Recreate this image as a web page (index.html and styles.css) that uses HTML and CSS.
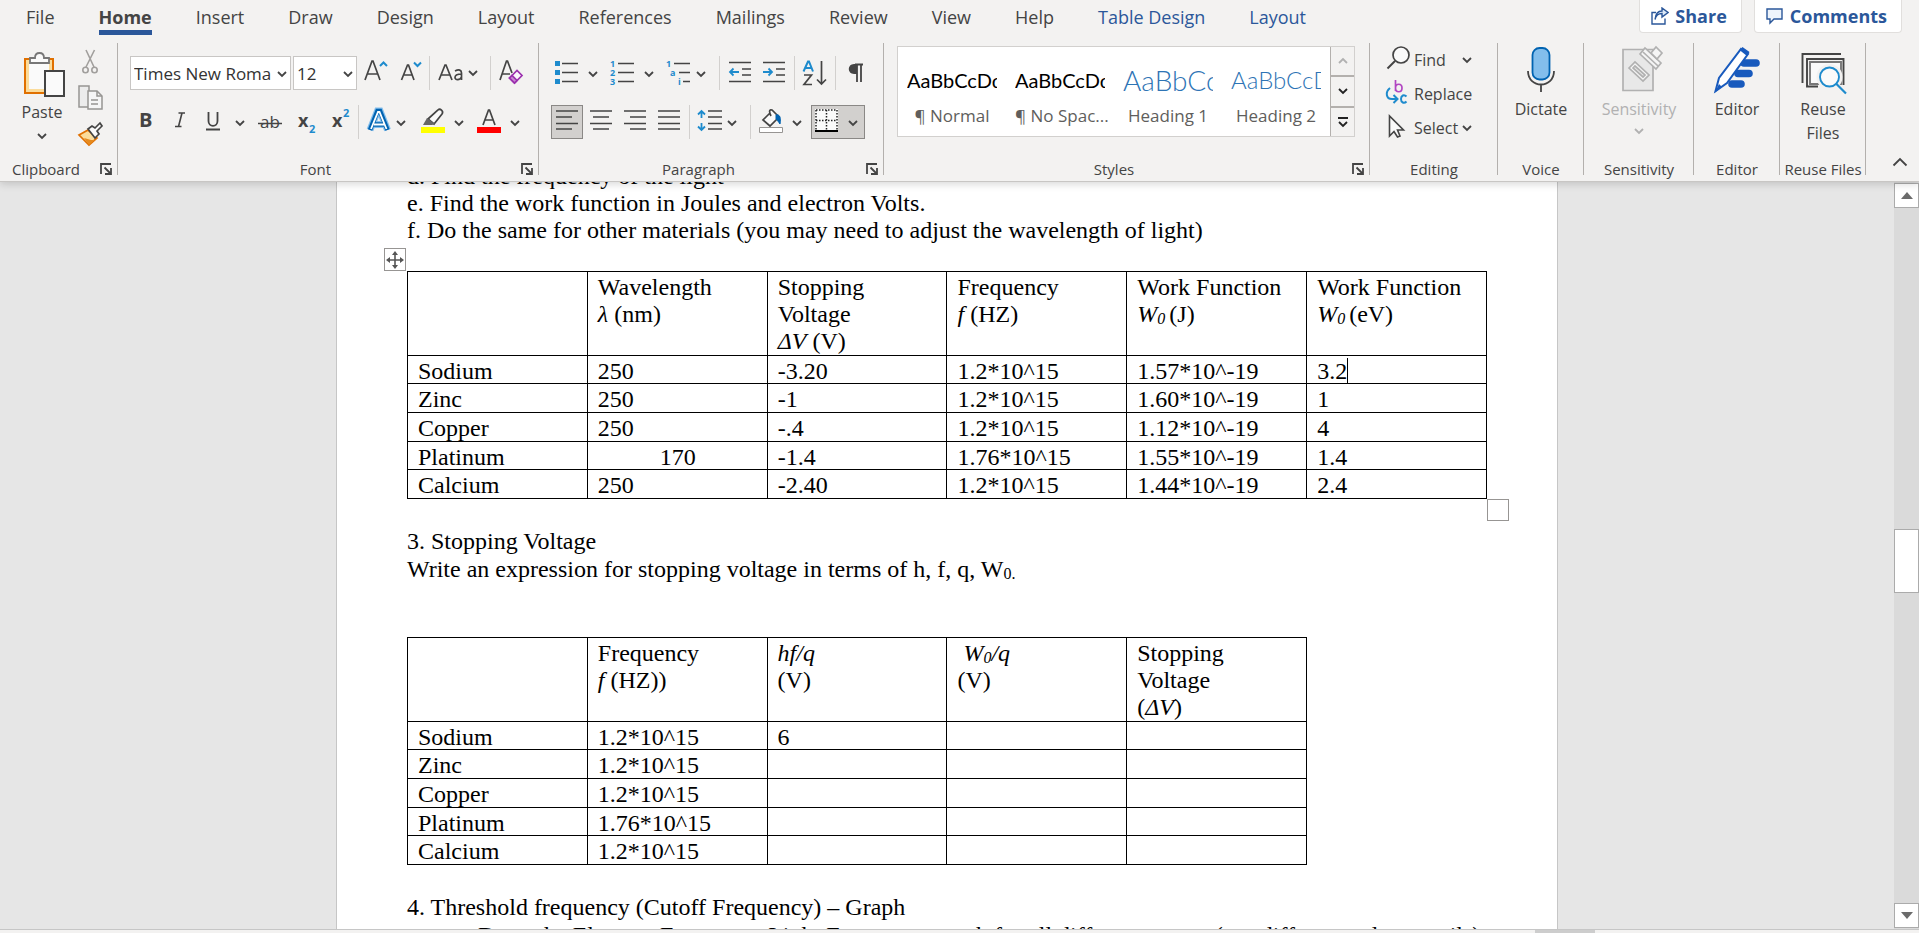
FILE: index.html
```html
<!DOCTYPE html>
<html lang="en">
<head>
<meta charset="utf-8">
<title>Document editor</title>
<link rel="stylesheet" href="styles.css">
</head>
<body>
<svg class="defs" width="0" height="0" aria-hidden="true">
  <defs>
    <path id="chev" d="M-4 -2L0 2L4 -2" fill="none" stroke="currentColor" stroke-width="1.8"/>
    <path id="launch" d="M1 11V1H11M4.500 4.500L10 10M11 5V11H5" fill="none" stroke="#444" stroke-width="1.800"/>
  </defs>
</svg>
<header class="ribbon">
  <nav class="tabs" aria-label="Ribbon tabs">
    <button class="tab">File</button>
    <button class="tab active">Home</button>
    <button class="tab">Insert</button>
    <button class="tab">Draw</button>
    <button class="tab">Design</button>
    <button class="tab">Layout</button>
    <button class="tab">References</button>
    <button class="tab">Mailings</button>
    <button class="tab">Review</button>
    <button class="tab">View</button>
    <button class="tab">Help</button>
    <button class="tab context">Table Design</button>
    <button class="tab context">Layout</button>
    <div class="actions">
      <button class="action"><svg width="18" height="18" viewBox="0 0 18 18" fill="none" stroke="#2b579a" stroke-width="1.400"><path d="M5 5.500H1V17H14V11.500"/><path fill="#dce9f7" d="M4 12.500C5 8 7.500 6.500 11 6.500V10L17 5.500L11 1V4C7 4 4.500 7 4 12.500Z"/></svg>Share</button>
      <button class="action"><svg width="18" height="18" viewBox="0 0 18 18" fill="#eef4fb" stroke="#2b579a" stroke-width="1.400"><path d="M1 2H16V12H8L4 16V12H1Z"/></svg>Comments</button>
    </div>
  </nav>

  <div class="groups">
    <section class="group clipboard" aria-label="Clipboard">
      <div class="group-body">
        <button class="big paste"><svg width="48" height="54" viewBox="20 43 48 54"><path d="M27 56H55V90H27Z" fill="#fbdc9b" stroke="#e07000" stroke-width="2"/><path d="M31 60H51V86H31Z" fill="#fafafa"/><path d="M32 60V55H37C37 51 39 50 41.500 50S46 51 46 55H51V60Z" fill="#fafafa" stroke="#777" stroke-width="1.800"/><path d="M47 68H66V93H47Z" fill="#fafafa" stroke="#444" stroke-width="2"/></svg><span>Paste</span><svg width="12" height="24" viewBox="-6 -12 12 24"><use href="#chev"/></svg></button>
        <div class="stack">
          <button aria-label="Cut"><svg width="28" height="34" viewBox="76 43 28 34" fill="none" stroke="#a19f9d" stroke-width="1.600"><path d="M86 50L94 67M94.500 50L86 67"/><circle cx="85.500" cy="70" r="2.700"/><circle cx="94.500" cy="70" r="2.700"/></svg></button>
          <button aria-label="Copy"><svg width="28" height="34" viewBox="76 80 28 34" fill="#ececec" stroke="#979593" stroke-width="1.500"><path d="M79 86H89V107H79Z"/><path fill="#f6f6f6" d="M88 91H97L102 96V109H88Z"/><path d="M97 91V96H102M91 100H98M91 104H98" fill="none"/></svg></button>
          <button aria-label="Format Painter"><svg width="28" height="34" viewBox="76 116 28 34" stroke-width="1.700"><path d="M88 129L79 134L89 144L97 137Z" fill="#fbdc9b" stroke="#e07000"/><path d="M84 137L91 139L95 139L89 144Z" fill="#e58a1f"/><path d="M88 128L92 125L95 127L100 122L102 125L97 130L99 133L95 137Z" fill="#fafafa" stroke="#444"/></svg></button>
        </div>
      </div>
      <footer class="group-label"><span>Clipboard</span><button aria-label="Clipboard settings"><svg width="12" height="12"><use href="#launch"/></svg></button></footer>
    </section>

    <section class="group font" aria-label="Font">
      <div class="rows">
        <div class="row">
          <label class="combo face"><select aria-label="Font name"><option>Times New Roma</option></select><svg width="12" height="12" viewBox="-6 -6 12 12"><use href="#chev"/></svg></label>
          <label class="combo size"><select aria-label="Font size"><option>12</option></select><svg width="12" height="12" viewBox="-6 -6 12 12"><use href="#chev"/></svg></label>
          <button aria-label="Grow font"><svg width="38" height="34" viewBox="357 56 38 34" fill="none" stroke="#444" stroke-width="1.700"><path d="M365 80L372 61H373L380 80M367.500 74H377.500"/><path d="M380 66L383.500 62.500L387 66" stroke="#1e8bcd" stroke-width="2"/></svg></button>
          <button aria-label="Shrink font"><svg width="34" height="34" viewBox="395 56 34 34" fill="none" stroke="#444" stroke-width="1.700"><path d="M401.500 80L407.500 65H408.500L414 80M404 75H412"/><path d="M414 62.500L417.500 66L421 62.500" stroke="#1e8bcd" stroke-width="2"/></svg></button>
          <i class="sep"></i>
          <button aria-label="Change case"><svg width="60" height="34" viewBox="430 56 60 34"><g fill="none" stroke="#444" stroke-width="1.700"><path d="M439 80L445 65H446L452 80M441.500 75H449.500"/><path d="M455 71C459 69 461.500 70 461.500 73V80M461.500 74C457 74 455 75 455 77.500C455 80.500 460 80.500 461.500 77"/></g><use href="#chev" x="473" y="73"/></svg></button>
          <i class="sep"></i>
          <button aria-label="Clear formatting"><svg width="40" height="34" viewBox="491 56 40 34" fill="none" stroke="#444" stroke-width="1.700"><path d="M500 80L506.500 61H507.500L512 73M502.500 74H510"/><path d="M509.500 78L517 70.500L522 75.500L514.500 83Z" fill="#faf4fb" stroke="#9b2fae"/><path d="M509.500 78L512 75.500L517 80.500L514.500 83Z" fill="#c889d3" stroke="#9b2fae"/></svg></button>
        </div>
        <div class="row">
          <button aria-label="Bold"><svg width="32" height="34" viewBox="130 105 32 34"><text x="139" y="127" font-size="20" font-weight="700">B</text></svg></button>
          <button aria-label="Italic"><svg width="35" height="34" viewBox="162 105 35 34" fill="none" stroke="#444" stroke-width="1.600"><path d="M178.500 113H185M175 126.500H181.500M182 113L178.500 126.500"/></svg></button>
          <button aria-label="Underline"><svg width="55" height="34" viewBox="197 105 55 34"><path d="M208.500 112V121C208.500 127.500 217.500 127.500 217.500 121V112M206 129.500H220" fill="none" stroke="#444" stroke-width="1.800"/><use href="#chev" x="240" y="123"/></svg></button>
          <button aria-label="Strikethrough"><svg width="36" height="34" viewBox="252 105 36 34"><text x="260" y="128" font-size="17">ab</text><path d="M258 123.500H282" stroke="#444" stroke-width="1.500"/></svg></button>
          <button aria-label="Subscript"><svg width="36" height="34" viewBox="288 105 36 34"><text x="298" y="127" font-size="18" font-weight="700">x</text><text x="309" y="133" font-size="11" font-weight="700" class="blue">2</text></svg></button>
          <button aria-label="Superscript"><svg width="34" height="34" viewBox="324 105 34 34"><text x="332" y="127" font-size="18" font-weight="700">x</text><text x="343" y="117" font-size="11" font-weight="700" class="blue">2</text></svg></button>
          <i class="sep"></i>
          <button aria-label="Text effects"><svg width="54" height="34" viewBox="359 105 54 34"><path d="M370 130L377.500 111H380L387.500 130M373 124.500H385" fill="none" stroke="#83beec" stroke-width="7"/><path d="M370 130L377.500 111H380L387.500 130M373 124.500H385" fill="none" stroke="#0063b1" stroke-width="4.600"/><path d="M371 129L378 112H379.500L386.500 129M374 124.500H384" fill="none" stroke="#fff" stroke-width="1.800"/><use href="#chev" x="401" y="123"/></svg></button>
          <button aria-label="Text highlight color"><svg width="56" height="34" viewBox="413 105 56 34"><path d="M421 127H445V133H421Z" fill="#ff0"/><path d="M428 119L438 110C440 108 444 111 442 114L434 124Z" fill="#fafafa" stroke="#444" stroke-width="1.700"/><path d="M427 118L435 124L432 125H423Z" fill="#666"/><use href="#chev" x="459" y="123"/></svg></button>
          <button aria-label="Font color"><svg width="60" height="34" viewBox="469 105 60 34"><path d="M477 127H501V133H477Z" fill="red"/><path d="M483 125L488.500 110H489.500L495 125M485 120H493" fill="none" stroke="#444" stroke-width="1.700"/><use href="#chev" x="515" y="123"/></svg></button>
        </div>
      </div>
      <footer class="group-label"><span>Font</span><button aria-label="Font settings"><svg width="12" height="12"><use href="#launch"/></svg></button></footer>
    </section>

    <section class="group paragraph" aria-label="Paragraph">
      <div class="rows">
        <div class="row">
          <button aria-label="Bullets"><svg width="52" height="34" viewBox="551 56 52 34"><path d="M555 61H560V66H555ZM555 70H560V75H555ZM555 79H560V84H555Z" fill="#1e8bcd"/><path d="M562 63.500H578M562 72.500H578M562 81.500H578" stroke="#444" stroke-width="1.500"/><use href="#chev" x="593" y="74"/></svg></button>
          <button aria-label="Numbering"><svg width="56" height="34" viewBox="603 56 56 34"><g class="blue" font-size="9" font-weight="700"><text x="610" y="67">1</text><text x="610" y="76">2</text><text x="610" y="85">3</text></g><path d="M618 63.500H634M618 72.500H634M618 81.500H634" stroke="#444" stroke-width="1.500"/><use href="#chev" x="649" y="74"/></svg></button>
          <button aria-label="Multilevel list"><svg width="60" height="34" viewBox="659 56 60 34"><g class="blue" font-size="9" font-weight="700"><text x="666" y="67">1</text><text x="670" y="76">a</text><text x="678" y="85">i</text></g><path d="M674 63.500H690M679 72.500H690M683 81.500H690" stroke="#444" stroke-width="1.500"/><use href="#chev" x="701" y="74"/></svg></button>
          <i class="sep"></i>
          <button aria-label="Decrease indent"><svg width="37" height="34" viewBox="720 56 37 34" fill="none" stroke="#444" stroke-width="1.500"><path d="M729 62.500H751M742 69H751M742 75H751M729 81.500H751"/><path d="M739 72H730M733.500 68.500L730 72L733.500 75.500" stroke="#1e8bcd" stroke-width="1.800"/></svg></button>
          <button aria-label="Increase indent"><svg width="37" height="34" viewBox="757 56 37 34" fill="none" stroke="#444" stroke-width="1.500"><path d="M763 62.500H785M776 69H785M776 75H785M763 81.500H785"/><path d="M763 72H772M768.500 68.500L772 72L768.500 75.500" stroke="#1e8bcd" stroke-width="1.800"/></svg></button>
          <i class="sep"></i>
          <button aria-label="Sort"><svg width="40" height="34" viewBox="795 56 40 34" fill="none" stroke="#444" stroke-width="1.700"><path d="M803.500 71.500L808 61.500H809L813 71.500M805 68H811.500" stroke="#1e8bcd" stroke-width="2"/><path d="M804 75H811.500L804 84.500H812M821.500 61V84M817 79.500L821.500 84L826 79.500"/></svg></button>
          <i class="sep"></i>
          <button aria-label="Show formatting marks"><svg width="38" height="34" viewBox="836 56 38 34"><path d="M855 64.500H863M857 64V82M861 64V82" stroke="#444" stroke-width="1.800"/><path d="M857 64H854C847 64 847 74 854 74H857Z" fill="#444"/></svg></button>
        </div>
        <div class="row">
          <button class="pressed" aria-label="Align left"><svg width="32" height="34" viewBox="551 105 32 34"><path d="M556 111H578M556 117H572M556 123.500H578M556 129H572" stroke="#444" stroke-width="1.600"/></svg></button>
          <button aria-label="Center"><svg width="35" height="34" viewBox="583 105 35 34"><path d="M590 111H612M593 117H609M590 123.500H612M593 129H609" stroke="#444" stroke-width="1.600"/></svg></button>
          <button aria-label="Align right"><svg width="34" height="34" viewBox="618 105 34 34"><path d="M624 111H646M630 117H646M624 123.500H646M630 129H646" stroke="#444" stroke-width="1.600"/></svg></button>
          <button aria-label="Justify"><svg width="37" height="34" viewBox="652 105 37 34"><path d="M658 111H680M658 117H680M658 123.500H680M658 129H680" stroke="#444" stroke-width="1.600"/></svg></button>
          <i class="sep"></i>
          <button aria-label="Line spacing"><svg width="60" height="34" viewBox="690 105 60 34"><path d="M701.500 111V118M698 114.500L701.500 111L705 114.500M701.500 130V123M698 126.500L701.500 130L705 126.500" fill="none" stroke="#1e8bcd" stroke-width="1.800"/><path d="M708 111H722M708 117H722M708 123.500H722M708 129H722" stroke="#444" stroke-width="1.600"/><use href="#chev" x="732" y="123"/></svg></button>
          <i class="sep"></i>
          <button aria-label="Shading"><svg width="60" height="34" viewBox="751 105 60 34"><path d="M759.500 127.500H782.500V132.500H759.500Z" fill="#fff" stroke="#979593"/><path d="M770 113L763 120L770 126L779 117L772 110C769 109 769 112 771 116" fill="#fafafa" stroke="#444" stroke-width="1.700"/><path d="M776 115C780 114 781 118 780 124C778 121 777 120 776 119Z" fill="#0063b1" stroke="#0063b1"/><use href="#chev" x="797" y="123"/></svg></button>
          <button class="pressed" aria-label="Borders"><svg width="54" height="34" viewBox="811 105 54 34"><path d="M815 109H838V131H815Z" fill="#fafafa"/><path d="M816 110H837M816 120.500H837M816 110V130M826.500 110V130M837 110V130" fill="none" stroke="#222" stroke-width="1.500" stroke-dasharray="1.500 1.500"/><path d="M815 131H838" stroke="#000" stroke-width="2"/><use href="#chev" x="853" y="123"/></svg></button>
        </div>
      </div>
      <footer class="group-label"><span>Paragraph</span><button aria-label="Paragraph settings"><svg width="12" height="12"><use href="#launch"/></svg></button></footer>
    </section>

    <section class="group styles" aria-label="Styles">
      <div class="gallery">
        <button class="style"><span class="preview">AaBbCcDd</span><span class="name">¶ Normal</span></button>
        <button class="style"><span class="preview">AaBbCcDd</span><span class="name">¶ No Spac...</span></button>
        <button class="style"><span class="preview h1">AaBbCc</span><span class="name">Heading 1</span></button>
        <button class="style"><span class="preview h2">AaBbCcD</span><span class="name">Heading 2</span></button>
        <div class="gallery-nav">
          <button class="off" aria-label="Previous styles"><svg width="12" height="12" viewBox="-6 -6 12 12"><path d="M-4 2L0 -2L4 2" fill="none" stroke="currentColor" stroke-width="1.800"/></svg></button>
          <button aria-label="Next styles"><svg width="12" height="12" viewBox="-6 -6 12 12"><use href="#chev"/></svg></button>
          <button aria-label="More styles"><svg width="12" height="12" viewBox="-6 -6 12 12"><path d="M-5 -4H5" stroke="currentColor" stroke-width="2"/><use href="#chev" y="2"/></svg></button>
        </div>
      </div>
      <footer class="group-label"><span>Styles</span><button aria-label="Styles settings"><svg width="12" height="12"><use href="#launch"/></svg></button></footer>
    </section>

    <section class="group editing" aria-label="Editing">
      <div class="list">
        <button><svg width="30" height="34" viewBox="1384 43 30 34"><circle cx="1401" cy="55" r="8" fill="#fafafa" stroke="#444" stroke-width="1.700"/><path d="M1395 61L1387.500 68.500" stroke="#444" stroke-width="2"/></svg><span class="find">Find</span><svg width="12" height="12" viewBox="-6 -6 12 12"><use href="#chev"/></svg></button>
        <button><svg width="30" height="34" viewBox="1384 77 30 34" fill="none" stroke-width="2"><path d="M1395.500 80V91M1395.500 88C1395.500 83 1402 83 1402 88S1395.500 93 1395.500 88" stroke="#b146c2" stroke-width="1.700"/><path d="M1406.500 96.500C1404 94 1401 95.500 1401 99S1404 104 1406.500 101.500" stroke="#1e8bcd"/><path d="M1390 88C1385 92 1386 99 1392 99H1397M1393.500 95L1397.500 99L1393.500 103" stroke="#1e8bcd"/></svg><span>Replace</span></button>
        <button><svg width="30" height="34" viewBox="1384 111 30 34"><path d="M1389.500 116V136L1394 131.500L1397.500 137L1400 136L1397.500 130H1403.500Z" fill="#fafafa" stroke="#444" stroke-width="1.600"/></svg><span>Select</span><svg width="18" height="12" viewBox="-9 -6 18 12"><use href="#chev"/></svg></button>
      </div>
      <footer class="group-label plain"><span>Editing</span></footer>
    </section>

    <section class="group voice" aria-label="Voice">
      <button class="big"><svg width="54" height="54" viewBox="1514 43 54 54" fill="none" stroke="#444" stroke-width="1.800"><rect x="1532.500" y="48" width="17" height="31.500" rx="7" fill="#83beec" stroke="#0063b1"/><path d="M1528 71C1528 89 1554 89 1554 71M1541 84.500V92"/></svg><span>Dictate</span></button>
      <footer class="group-label plain"><span>Voice</span></footer>
    </section>

    <section class="group sensitivity" aria-label="Sensitivity">
      <button class="big" disabled><svg width="54" height="54" viewBox="1612 43 54 54" fill="#e8e8e8" stroke="#b1b1b1" stroke-width="1.700"><path d="M1623 49.500H1653V90.500H1623Z"/><path d="M1629 68L1635 62L1649 75L1643 81Z" fill="#f5f5f5"/><path d="M1633 68L1635 66L1645 75L1643 77Z"/><path d="M1640 54L1645 48L1661 63L1656 69Z" fill="#f5f5f5"/><path d="M1643 52L1658 66"/><path d="M1651 53L1656 47L1662 53L1657 59Z" fill="#f5f5f5"/></svg><span>Sensitivity</span><svg width="12" height="24" viewBox="-6 -10 12 24"><use href="#chev"/></svg></button>
      <footer class="group-label plain"><span>Sensitivity</span></footer>
    </section>

    <section class="group editor" aria-label="Editor">
      <button class="big"><svg width="54" height="54" viewBox="1710 43 54 54"><path d="M1744 63H1756M1738 73.500H1749M1732 84H1741" stroke="#185abd" stroke-width="7.600" stroke-linecap="round"/><path d="M1741 49L1748 54L1727 83L1715.500 91L1719 78Z" fill="#fff" stroke="#185abd" stroke-width="2"/><path d="M1739.500 50L1742.500 47L1749.500 52L1747 56Z" fill="#185abd"/><path d="M1719 84L1722 87L1714.500 93Z" fill="#185abd"/></svg><span>Editor</span></button>
      <footer class="group-label plain"><span>Editor</span></footer>
    </section>

    <section class="group reuse" aria-label="Reuse Files">
      <button class="big"><svg width="54" height="54" viewBox="1796 43 54 54" fill="none" stroke="#444" stroke-width="1.900"><path d="M1802.500 83V54H1841"/><path d="M1818 86.500H1807V59H1843.500V85"/><path d="M1810 62H1841V84H1810Z" fill="#fafafa" stroke="#777"/><circle cx="1829.500" cy="77" r="13" fill="#f3f2f1" stroke="none"/><circle cx="1829.500" cy="77" r="9.500" fill="#fafafa" stroke="#1e8bcd"/><path d="M1836 83.500L1846 93.500" stroke="#1e8bcd" stroke-width="2.200"/></svg><span>Reuse Files</span></button>
      <footer class="group-label plain"><span>Reuse Files</span></footer>
    </section>

    <button class="collapse" aria-label="Collapse the ribbon"><svg width="16" height="12" viewBox="0 0 16 12"><path d="M1.500 9.500L8 3L14.500 9.500" fill="none" stroke="#444" stroke-width="1.800"/></svg></button>
  </div>
</header>

<main class="workspace">
  <div class="canvas">
    <article class="page">
      <p>d. Find the frequency of the light</p>
      <p>e. Find the work function in Joules and electron Volts.</p>
      <p>f. Do the same for other materials (you may need to adjust the wavelength of light)</p>
      <p><br></p>
      <div class="table-wrap">
        <button class="move" aria-label="Move table"><svg width="18" height="18" viewBox="0 0 18 18"><path d="M9 2V16M2 9H16" stroke="#555" stroke-width="1.600"/><path d="M9 0L12 4H6ZM9 18L12 14H6ZM0 9L4 6V12ZM18 9L14 6V12Z" fill="#555"/></svg></button>
        <table class="six">
          <tr><th></th><th>Wavelength<br><i>λ</i> (nm)</th><th>Stopping Voltage<br><i>ΔV</i> (V)</th><th>Frequency<br><i>f </i>(HZ)</th><th>Work Function<br><i>W<sub>0 </sub></i>(J)</th><th>Work Function<br><i>W<sub>0 </sub></i>(eV)</th></tr>
          <tr><td>Sodium</td><td>250</td><td>-3.20</td><td>1.2*10^15</td><td>1.57*10^-19</td><td><span class="caret">3.2</span></td></tr>
          <tr><td>Zinc</td><td>250</td><td>-1</td><td>1.2*10^15</td><td>1.60*10^-19</td><td>1</td></tr>
          <tr><td>Copper</td><td>250</td><td>-.4</td><td>1.2*10^15</td><td>1.12*10^-19</td><td>4</td></tr>
          <tr><td>Platinum</td><td class="indent">170</td><td>-1.4</td><td>1.76*10^15</td><td>1.55*10^-19</td><td>1.4</td></tr>
          <tr><td>Calcium</td><td>250</td><td>-2.40</td><td>1.2*10^15</td><td>1.44*10^-19</td><td>2.4</td></tr>
        </table>
        <span class="resize"></span>
      </div>
      <p class="loose"><br></p>
      <p class="loose">3. Stopping Voltage</p>
      <p class="loose">Write an expression for stopping voltage in terms of h, f, q, W<sub>0.</sub></p>
      <p><br></p>
      <p><br></p>
      <table class="five">
        <tr><th></th><th>Frequency<br><i>f </i>(HZ))</th><th><i>hf/q</i><br>(V)</th><th>&nbsp;<i>W<sub>0</sub>/q</i><br>(V)</th><th>Stopping Voltage<br>(<i>ΔV</i>)</th></tr>
        <tr><td>Sodium</td><td>1.2*10^15</td><td>6</td><td></td><td></td></tr>
        <tr><td>Zinc</td><td>1.2*10^15</td><td></td><td></td><td></td></tr>
        <tr><td>Copper</td><td>1.2*10^15</td><td></td><td></td><td></td></tr>
        <tr><td>Platinum</td><td>1.76*10^15</td><td></td><td></td><td></td></tr>
        <tr><td>Calcium</td><td>1.2*10^15</td><td></td><td></td><td></td></tr>
      </table>
      <p class="loose"><br></p>
      <p class="loose">4. Threshold frequency (Cutoff Frequency) – Graph</p>
      <p class="item">Draw the Electron Energy vs. Light Frequency graph for all different curves (use different color pencils)</p>
    </article>
  </div>
  <div class="scrollbar">
    <button class="arrow" aria-label="Scroll up"><svg width="12" height="7"><path d="M0 7L6 0L12 7Z" fill="#6b6b6b"/></svg></button>
    <div class="track"><div class="thumb"></div></div>
    <button class="arrow" aria-label="Scroll down"><svg width="12" height="7"><path d="M0 0L6 7L12 0Z" fill="#6b6b6b"/></svg></button>
  </div>
</main>
<footer class="status"><span class="status-view"></span></footer>
</body>
</html>
```

FILE: styles.css
```css
* { box-sizing: border-box; }
body {
  margin: 0;
  height: 100vh;
  display: flex;
  flex-direction: column;
  overflow: hidden;
  background: #e6e6e6;
  color: #444;
  font-family: "Open Sans", "Noto Sans", sans-serif;
  font-size: 16px;
}
button {
  margin: 0;
  padding: 0;
  border: 0;
  background: none;
  color: inherit;
  font: inherit;
  display: flex;
  align-items: center;
  justify-content: center;
}
svg { display: block; flex: none; }
svg text { fill: #444; }
svg text.blue, svg .blue text { fill: #1e8bcd; }
.defs { position: absolute; }

/* Ribbon */
.ribbon {
  position: relative;
  z-index: 1;
  flex: none;
  background: #f3f2f1;
  border-bottom: 1px solid #c8c6c4;
  box-shadow: 0 2px 8px rgba(0, 0, 0, 0.16);
}
.tabs {
  display: flex;
  gap: 44px;
  height: 43px;
  padding-left: 26px;
  align-items: flex-start;
}
.tab {
  height: 35px;
  border-bottom: 5px solid transparent;
  padding-top: 3px;
  font-size: 18px;
  white-space: nowrap;
}
.tab.active { font-weight: 700; border-color: #2b579a; }
.tab.context { color: #2b579a; }
.actions { display: flex; gap: 12px; margin-left: auto; padding-right: 17px; }
.action {
  height: 33px;
  padding: 0 14px 0 11px;
  gap: 6px;
  border: 1px solid #e1dfdd;
  border-top: 0;
  border-radius: 0 0 4px 4px;
  background: #fff;
  color: #2b579a;
  font-size: 18px;
  font-weight: 700;
}

.groups { display: flex; height: 138px; }
.group {
  position: relative;
  flex: none;
  display: flex;
  flex-direction: column;
  justify-content: space-between;
  height: 135px;
}
.group::after {
  content: "";
  position: absolute;
  right: 0;
  top: 0;
  width: 1px;
  height: 132px;
  background: #b3b0ad;
}
.clipboard { width: 118px; }
.font { width: 421px; }
.paragraph { width: 345px; }
.styles { flex: 1 1 0; min-width: 0; }
.editing { width: 128px; }
.voice { width: 86px; }
.sensitivity { width: 110px; }
.editor { width: 86px; }
.reuse { width: 86px; }
.group-label {
  display: flex;
  align-items: center;
  height: 18px;
  padding-right: 6px;
  font-size: 15px;
  line-height: 18px;
  white-space: nowrap;
}
.group-label span { flex: 1; margin-right: 8px; text-align: center; }
.group-label.plain { padding-right: 0; }
.group-label.plain span { margin-right: 0; }
.group-body { display: flex; padding-left: 18px; }
.stack { display: flex; flex-direction: column; gap: 3px; padding-left: 10px; }
.big {
  flex-direction: column;
  justify-content: flex-start;
  align-self: center;
  line-height: 24px;
  padding: 0 12px;
}
.paste { padding: 0; }
.big:disabled { color: #b1b1b1; }

.rows { display: flex; flex-direction: column; gap: 15px; padding: 13px 0 0 12px; }
.row { display: flex; height: 34px; }
.sep { width: 1px; background: #d2d0ce; }
.pressed { background: #d2d0ce; outline: 1px solid #8a8886; outline-offset: -1px; }
.combo { position: relative; display: block; height: 34px; }
.combo select {
  appearance: none;
  width: 100%;
  height: 34px;
  padding: 0 0 0 3px;
  border: 1px solid #c8c6c4;
  border-radius: 0;
  background: #fff;
  color: #333;
  font-family: inherit;
  font-size: 17px;
}
.combo svg { position: absolute; right: 3px; top: 12px; }
.face { width: 161px; margin-right: 2px; }
.size { width: 64px; }

/* Style gallery */
.gallery {
  display: flex;
  height: 91px;
  margin: 3px 15px 0 13px;
  border: 1px solid #d2d0ce;
  background: #fff;
}
.style {
  flex: 1 1 0;
  min-width: 0;
  flex-direction: column;
  align-items: stretch;
  justify-content: flex-start;
  padding: 18px 9px 0;
}
.preview {
  height: 34px;
  overflow: hidden;
  text-align: left;
  white-space: nowrap;
  color: #000;
  font-family: Lato, sans-serif;
  font-size: 20px;
  line-height: 30px;
}
.preview.h1 { color: #2e74b5; font-size: 28px; font-weight: 300; }
.preview.h2 { color: #2e74b5; font-size: 24px; font-weight: 300; }
.name { color: #605e5c; font-size: 17px; line-height: 34px; white-space: nowrap; text-align: center; }
.gallery-nav { flex: none; width: 24px; display: flex; flex-direction: column; background: #f3f2f1; }
.gallery-nav button { flex: 1; border-left: 1px solid #b3b0ad; border-top: 2px solid #b3b0ad; color: #222; }
.gallery-nav .off { color: #b1b1b1; border-top: 0; }

.list { display: flex; flex-direction: column; padding-left: 14px; }
.list button { height: 34px; justify-content: flex-start; }
.list .find { width: 47px; text-align: left; }
.collapse { flex: 0 0 53px; align-self: flex-end; height: 30px; padding: 0 0 8px 14px; }

/* Document */
.workspace { flex: 1; min-height: 0; display: flex; overflow: hidden; }
.canvas { flex: 1; min-width: 0; overflow: hidden; }
.page {
  width: 1222px;
  margin: -19px auto 0;
  padding: 0 70px;
  min-height: 100vh;
  border: 1px solid #c6c6c6;
  border-width: 0 1px;
  background: #fff;
  color: #000;
  font-family: "Liberation Serif", serif;
  font-size: 24px;
  line-height: 27px;
}
.page p { margin: 0; white-space: nowrap; }
.page .loose { line-height: 28px; }
.page .item { padding-left: 71px; line-height: 28px; }
sub { font-size: 16px; line-height: 0; vertical-align: -2px; }
table { border-collapse: collapse; table-layout: fixed; }
.six { width: 1080px; }
.five { width: 900px; }
th, td {
  height: 28px;
  padding: 3px 10px 0;
  border: 1px solid #000;
  font-weight: 400;
  text-align: left;
  vertical-align: top;
  line-height: 24px;
}
th { height: 84px; line-height: 27px; padding-top: 2px; }
tr:nth-child(3) td, tr:nth-child(4) td, tr:nth-child(6) td { height: 29px; }
td.indent { padding-left: 72px; }
.table-wrap { position: relative; width: 1080px; }
.move {
  position: absolute;
  left: -23px;
  top: -23px;
  width: 22px;
  height: 23px;
  border: 1px solid #979593;
  background: #fff;
}
.resize {
  position: absolute;
  left: 100%;
  top: 100%;
  width: 22px;
  height: 22px;
  border: 1px solid #979593;
  background: #fff;
}
.caret { border-right: 1px solid #000; }

/* Scroll bar */
.scrollbar { flex: none; width: 25px; display: flex; flex-direction: column; padding: 1px 0; background: #dadada; }
.arrow { flex: none; height: 25px; border: 1px solid #ababab; background: #fff; }
.track { flex: 1; display: flex; flex-direction: column; }
.track::before { content: ""; flex: 321 0 0; }
.track::after { content: ""; flex: 310 0 0; }
.thumb { height: 64px; border: 1px solid #ababab; background: #fff; }

.status { flex: none; display: flex; height: 4px; padding-left: 80%; border-top: 1px solid #c6c6c6; background: #f3f2f1; }
.status-view { width: 60px; background: #cdcdcd; }
```
